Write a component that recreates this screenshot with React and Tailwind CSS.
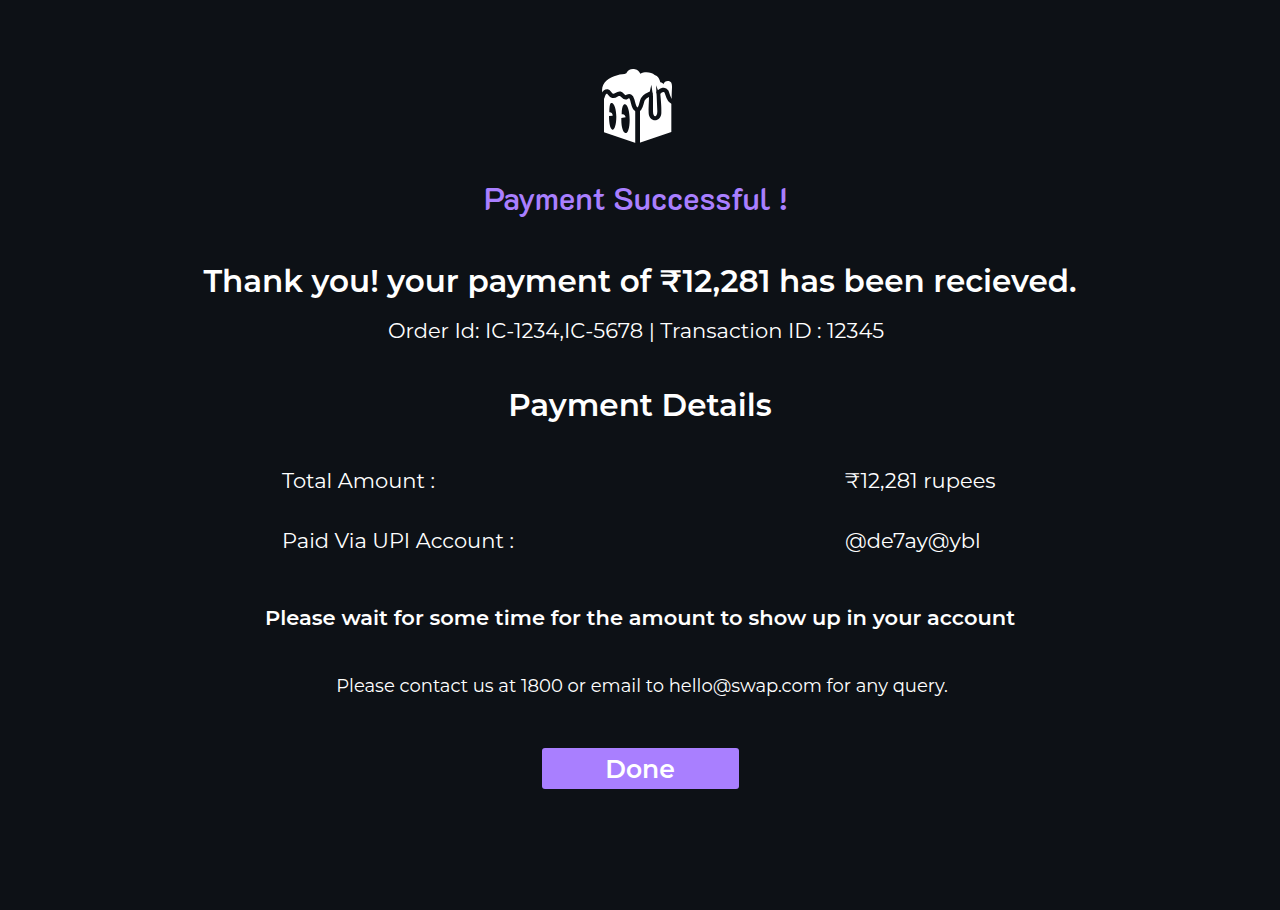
function Logo() {
  return (
    <svg viewBox="18 24 216 228" className="mr-[6px] h-[76px] w-[72px]" role="img" aria-label="Ice cube logo">
      <path
        fill="#fff"
        d="M22 97C17 74 37 53 67 46C76 42 88 44 94 40C98 29 111 25 120 28C128 29 132 35 136 41C151 34 170 37 179 45C189 48 194 57 196 67C201 68 204 70 205 73C208 61 224 60 229 68C233 77 230 91 230 105V126L229 130V216L134 248V150L129 154L122 151V249L27 217V116L22 104Z"
      />
      <g fill="none" stroke="#0d1116" strokeLinecap="round" strokeLinejoin="round" strokeWidth="13">
        <path d="M22 112C25 101 31 94 37 94C43 95 44 104 52 107C62 111 66 99 75 101C84 104 86 114 93 112C104 105 109 109 112 120C116 135 118 149 128 149C138 148 138 131 143 119C148 108 156 106 166 101" />
        <path d="M191 97C199 90 209 86 214 94C219 104 219 119 231 125" />
      </g>
      <path fill="#0d1116" d="M121 147H135V250H121Z" />
      <path
        fill="#0d1116"
        d="M169 74L162 106C162 128 160 145 161 160C163 188 197 188 199 160C200 140 197 116 196 101L190 94L183 76L185 108L187 154C187 174 174 174 174 154L174 108Z"
      />
      <path
        fill="#0d1116"
        d="M47 130C56 123 64 146 64 170C64 194 58 211 52 209C45 206 42 188 42 168L53 167C53 161 49 156 43 157C43 143 44 134 47 130ZM86 134C97 128 104 153 104 179C104 206 98 221 91 219C84 217 79 201 79 180L79 174L92 172C91 166 87 161 80 163C80 148 82 138 86 134Z"
      />
    </svg>
  );
}

const details = [
  { label: "Total Amount :", value: "₹12,281 rupees" },
  { label: "Paid Via UPI Account :", value: "@de7ay@ybl" },
];

export default function App() {
  return (
    <main className="flex min-h-screen flex-col items-center bg-[#0d1116] px-4 pt-[68px] pb-16 text-center font-['Montserrat','Inter',sans-serif] text-white">
      <Logo />
      <p className="mt-[34px] mr-2 font-['K2D','Roboto',sans-serif] text-[31px] leading-10 font-semibold text-[#a97fff]">
        Payment Successful !
      </p>
      <h1 className="mt-[43px] text-[31px] leading-10 font-semibold">
        Thank you! your payment of ₹12,281 has been recieved.
      </h1>
      <p className="mt-4 mr-2 text-[21px] leading-7">
        Order Id: IC-1234,IC-5678 | Transaction ID : 12345
      </p>
      <h2 className="mt-10 text-[31px] leading-10 font-semibold">Payment Details</h2>
      <dl className="mt-[42px] flex w-full max-w-[716px] flex-col gap-8 text-left text-[21px] leading-7">
        {details.map(({ label, value }) => (
          <div key={label} className="flex justify-between">
            <dt>{label}</dt>
            <dd className="w-[153px] whitespace-nowrap">{value}</dd>
          </div>
        ))}
      </dl>
      <p className="mt-[49px] text-[21px] leading-7 font-semibold">
        Please wait for some time for the amount to show up in your account
      </p>
      <p className="mt-10 ml-1 text-[18px] leading-7">
        Please contact us at 1800 or email to hello@swap.com for any query.
      </p>
      <button
        type="button"
        className="mt-12 h-[41px] w-[197px] rounded-[3px] bg-[#a97fff] text-[25px] leading-8 font-semibold"
      >
        Done
      </button>
    </main>
  );
}
